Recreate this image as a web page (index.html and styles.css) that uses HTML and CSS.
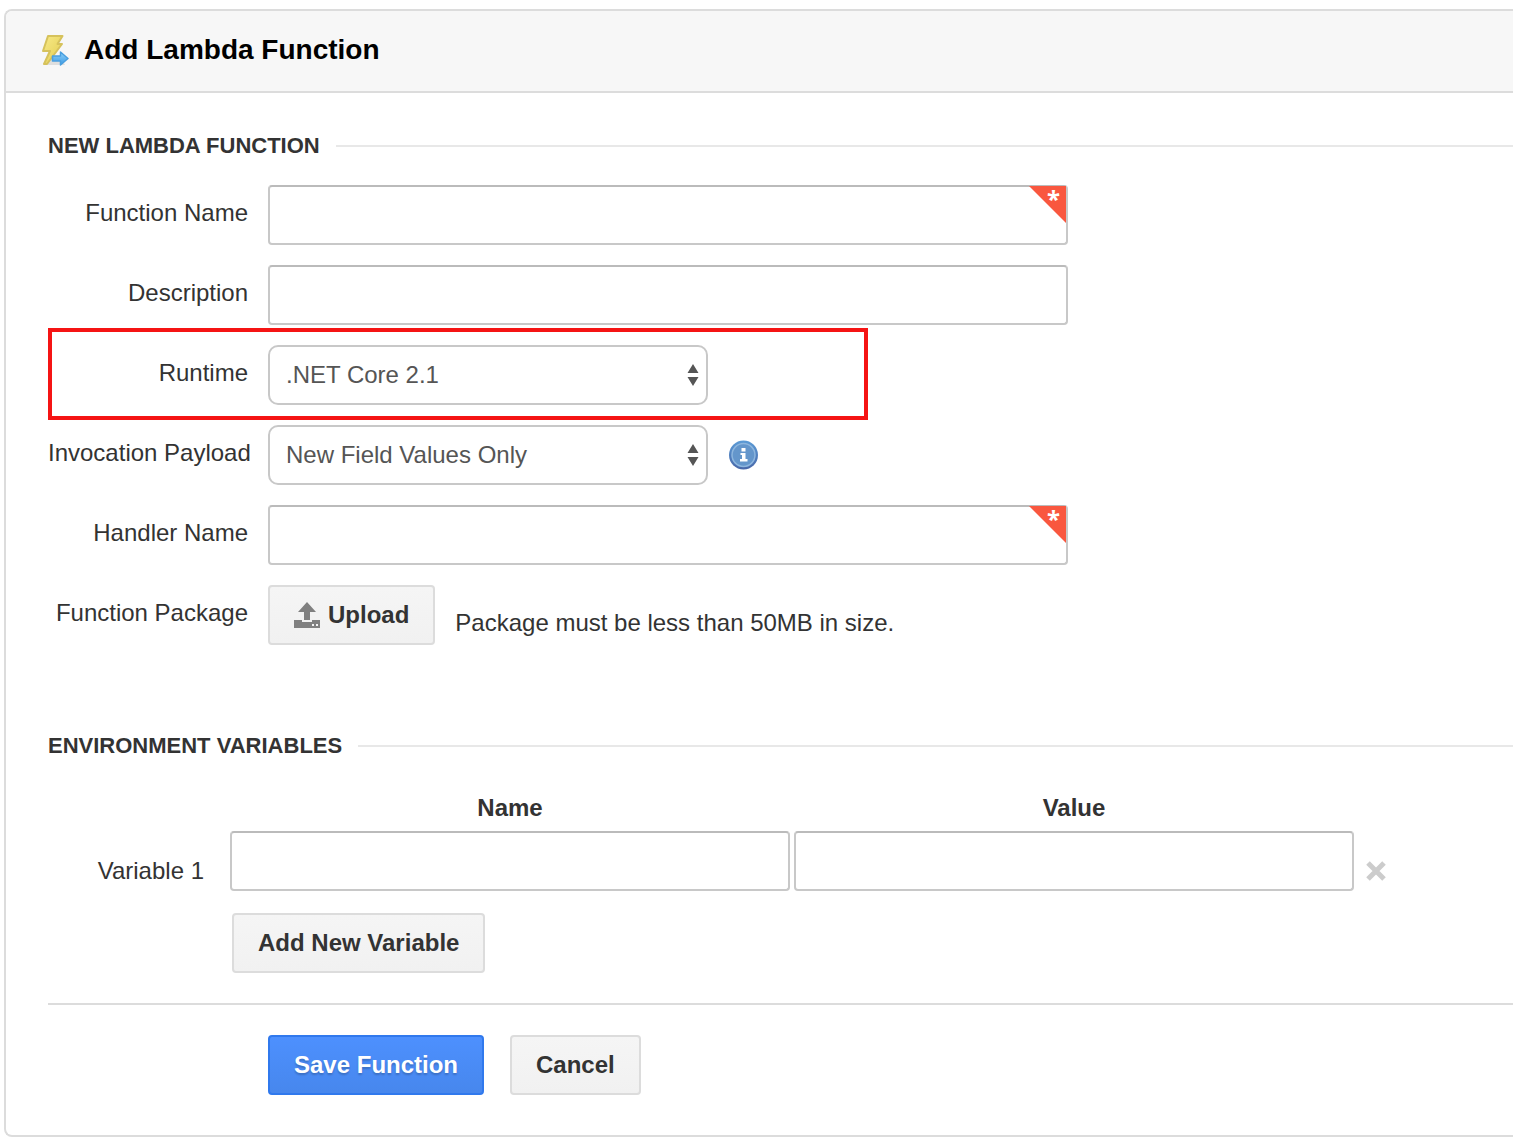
FILE: index.html
```html
<!DOCTYPE html>
<html lang="en">
<head>
    <meta charset="UTF-8">
    <meta name="viewport" content="width=device-width, initial-scale=1.0">
    <title>Add Lambda Function</title>
    <link rel="stylesheet" href="styles.css">
</head>
<body>
    <div class="panel">
        <header class="panel-header">
            <svg class="lambda-icon" viewBox="0 0 30 32" aria-hidden="true">
                <defs>
                    <linearGradient id="bolt" x1="0" y1="0" x2="1" y2="1">
                        <stop offset="0" stop-color="#f8ea88"/>
                        <stop offset="1" stop-color="#e2cc50"/>
                    </linearGradient>
                    <linearGradient id="arrow" x1="0" y1="0" x2="0" y2="1">
                        <stop offset="0" stop-color="#8fd0f8"/>
                        <stop offset="1" stop-color="#3b9be6"/>
                    </linearGradient>
                </defs>
                <path d="M3 31l7-6h12l3 6z" fill="#dedede"/>
                <path d="M8 2h14.500l-5 8h4.500L7 30H4l6-13H3z" fill="url(#bolt)" stroke="#d6c25c" stroke-width="2" stroke-linejoin="round"/>
                <path d="M12.500 22h8v-4l7.500 6.500-7.500 6.500v-4h-8z" fill="url(#arrow)" stroke="#4a9fdf" stroke-width="1.500" stroke-linejoin="round"/>
            </svg>
            <h1>Add Lambda Function</h1>
        </header>

        <form class="panel-body">
            <h2>New Lambda Function</h2>
            <div class="row">
                <label for="function-name">Function Name</label>
                <div class="field required">
                    <input type="text" id="function-name" required>
                    <span class="asterisk">*</span>
                </div>
            </div>
            <div class="row">
                <label for="description">Description</label>
                <div class="field">
                    <input type="text" id="description">
                </div>
            </div>
            <div class="row highlight">
                <label for="runtime">Runtime</label>
                <div class="select">
                    <select id="runtime">
                        <option>.NET Core 2.1</option>
                    </select>
                    <svg class="arrows" viewBox="0 0 12 22" aria-hidden="true">
                        <path d="M6 0l5.500 9h-11zM6 22l5.500-9h-11z" fill="#555"/>
                    </svg>
                </div>
            </div>
            <div class="row">
                <label for="payload">Invocation Payload</label>
                <div class="select">
                    <select id="payload">
                        <option>New Field Values Only</option>
                    </select>
                    <svg class="arrows" viewBox="0 0 12 22" aria-hidden="true">
                        <path d="M6 0l5.500 9h-11zM6 22l5.500-9h-11z" fill="#555"/>
                    </svg>
                </div>
                <svg class="info-icon" viewBox="0 0 30 30" aria-hidden="true">
                    <defs>
                        <linearGradient id="ring" x1="0" y1="0" x2="0" y2="1">
                            <stop offset="0" stop-color="#5b9bd6"/>
                            <stop offset="1" stop-color="#4867a8"/>
                        </linearGradient>
                    </defs>
                    <circle cx="15.500" cy="15" r="14.500" fill="url(#ring)"/>
                    <circle cx="15.500" cy="15" r="11.500" fill="#6496cb" stroke="#8db6de" stroke-width="1.500"/>
                    <path d="M13.500 8h4v3.500h-4zM12.500 13h5v6h2v2.500h-7.500V19h2v-4h-1.500z" fill="#fff"/>
                </svg>
            </div>
            <div class="row">
                <label for="handler-name">Handler Name</label>
                <div class="field required">
                    <input type="text" id="handler-name" required>
                    <span class="asterisk">*</span>
                </div>
            </div>
            <div class="row">
                <label for="upload">Function Package</label>
                <button type="button" class="button" id="upload">
                    <svg class="upload-icon" viewBox="0 0 26 26" aria-hidden="true">
                        <path d="M13 0l9 10h-6v8h-6v-8H4z" fill="#808080"/>
                        <path d="M0 18h8v2h10v-2h8v8H0zM18 22v2h2v-2zM22 22v2h2v-2z" fill="#808080" fill-rule="evenodd"/>
                    </svg>
                    Upload
                </button>
                <span class="hint">Package must be less than 50MB in size.</span>
            </div>

            <h2 class="env-title">Environment Variables</h2>
            <table>
                <thead>
                    <tr>
                        <td></td>
                        <th scope="col" id="col-name">Name</th>
                        <th scope="col" id="col-value">Value</th>
                        <td></td>
                    </tr>
                </thead>
                <tbody>
                    <tr>
                        <th scope="row" class="variable" id="variable-1">Variable 1</th>
                        <td><input type="text" aria-labelledby="variable-1 col-name"></td>
                        <td><input type="text" aria-labelledby="variable-1 col-value"></td>
                        <td class="remove-cell">
                            <button type="button" class="remove" aria-label="Remove">
                                <svg viewBox="0 0 20 20" aria-hidden="true">
                                    <path d="M2 2l16 16M18 2l-16 16" stroke="#ccc" stroke-width="5"/>
                                </svg>
                            </button>
                        </td>
                    </tr>
                </tbody>
            </table>
            <button type="button" class="button add">Add New Variable</button>

            <div class="actions">
                <button type="submit" class="button primary">Save Function</button>
                <button type="button" class="button">Cancel</button>
            </div>
        </form>
    </div>
</body>
</html>
```
FILE: styles.css
```css
*, *::before, *::after {
    box-sizing: border-box;
}
body {
    margin: 0;
    padding: 9px 0 3px 4px;
    background: #fff;
    color: #333;
    font-family: "Liberation Sans", Arial, sans-serif;
    font-size: 24px;
}
.panel {
    border: 2px solid #dcdcdc;
    border-right: 0;
    border-radius: 8px 0 0 8px;
    overflow: hidden;
}
.panel-header {
    display: flex;
    align-items: center;
    gap: 14px;
    padding: 23px 34px 25px;
    background: #f7f7f7;
    border-bottom: 2px solid #dcdcdc;
}
.lambda-icon {
    width: 30px;
    height: 32px;
}
h1 {
    margin: 0;
    color: #000;
    font-size: 28px;
    line-height: 32px;
}
.panel-body {
    padding: 40px 0 40px 42px;
}
h2 {
    display: flex;
    align-items: center;
    gap: 16px;
    margin: 0 0 26px;
    font-size: 22px;
    line-height: 26px;
    text-transform: uppercase;
}
h2::after {
    content: "";
    flex: 1;
    height: 2px;
    background: #e8e8e8;
}

/* form rows */
.row {
    display: flex;
    position: relative;
    gap: 20px;
    margin-bottom: 20px;
}
.row label {
    width: 200px;
    line-height: 56px;
    text-align: right;
    white-space: nowrap;
}
.highlight::after {
    content: "";
    position: absolute;
    top: -17px;
    left: 0;
    width: 820px;
    height: 92px;
    border: 4px solid #f51414;
    pointer-events: none;
}
.field {
    position: relative;
    width: 800px;
}
input {
    display: block;
    width: 100%;
    height: 60px;
    padding: 0 16px;
    border: 2px solid #c8c8c8;
    border-top-color: #bbb;
    border-radius: 4px;
    background: #fff;
    color: #555;
    font: inherit;
}
.required::after {
    content: "";
    position: absolute;
    top: 1px;
    right: 2px;
    width: 37px;
    height: 37px;
    background: #f9573f;
    clip-path: polygon(0 0, 100% 0, 100% 100%);
}
.asterisk {
    position: absolute;
    top: 2px;
    right: 8px;
    z-index: 1;
    color: #fff;
    font-family: "Noto Sans", sans-serif;
    font-size: 24px;
    font-weight: bold;
    line-height: 24px;
}
.select {
    position: relative;
    width: 440px;
}
select {
    width: 100%;
    height: 60px;
    padding: 0 16px 2px;
    appearance: none;
    border: 2px solid #c8c8c8;
    border-radius: 10px;
    background: #fff;
    color: #555;
    font: inherit;
}
.arrows {
    position: absolute;
    top: 19px;
    right: 9px;
    width: 12px;
    height: 22px;
    pointer-events: none;
}
.info-icon {
    width: 30px;
    height: 30px;
    margin-top: 15px;
}
.hint {
    padding-top: 10px;
    line-height: 56px;
}

/* buttons */
.button {
    display: flex;
    align-items: center;
    gap: 8px;
    height: 60px;
    padding: 0 24px;
    border: 2px solid #dcdcdc;
    border-radius: 4px;
    background: linear-gradient(#f5f5f5, #f1f1f1);
    color: #333;
    font: inherit;
    font-weight: bold;
}
.primary {
    border-color: #3079ed;
    background: linear-gradient(#4d90fe, #4787ed);
    color: #fff;
    text-shadow: 0 2px 2px rgba(0, 0, 0, 0.2);
}
.upload-icon {
    width: 26px;
    height: 26px;
}

/* environment variables */
.env-title {
    margin-top: 82px;
}
table {
    border-spacing: 0;
    margin-bottom: 22px;
}
th, td {
    padding: 0 2px;
}
thead th {
    width: 564px;
    line-height: 46px;
}
.variable {
    width: 180px;
    padding: 20px 24px 0 0;
    font-weight: normal;
    text-align: right;
}
.remove-cell {
    padding: 20px 0 0 10px;
}
.remove {
    display: block;
    padding: 0;
    border: 0;
    background: none;
}
.remove svg {
    display: block;
    width: 20px;
    height: 20px;
}
.add {
    margin-left: 184px;
}
.actions {
    display: flex;
    gap: 26px;
    margin-top: 30px;
    padding: 30px 0 0 220px;
    border-top: 2px solid #dcdcdc;
}
```
